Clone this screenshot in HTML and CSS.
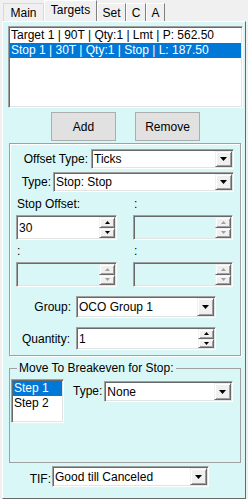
FILE: index.html
```html
<!DOCTYPE html>
<html lang="en">
<head>
    <meta charset="UTF-8">
    <title>Targets</title>
    <link rel="stylesheet" href="styles.css">
</head>
<body>

    <div class="tabs">
        <div class="tab t-main">Main</div>
        <div class="tab t-targets active">Targets</div>
        <div class="tab t-set">Set</div>
        <div class="tab t-c">C</div>
        <div class="tab t-a">A</div>
    </div>

    <div class="page">
        <div class="list targets">
            <div class="item">Target 1 | 90T | Qty:1 | Lmt | P: 562.50</div>
            <div class="item sel">Stop 1 | 30T | Qty:1 | Stop | L: 187.50</div>
        </div>

        <div class="buttons">
            <button class="btn">Add</button>
            <button class="btn">Remove</button>
        </div>

        <div class="box">
            <div class="row r-offset">
                <span class="lbl">Offset Type:</span>
                <div class="combo">
                    <span class="val">Ticks</span>
                    <span class="drop"><svg width="7" height="4" viewBox="0 0 7 4"><polygon points="0,0 7,0 3.5,4" fill="#000"/></svg></span>
                </div>
            </div>
            <div class="row r-type">
                <span class="lbl">Type:</span>
                <div class="combo">
                    <span class="val">Stop: Stop</span>
                    <span class="drop"><svg width="7" height="4" viewBox="0 0 7 4"><polygon points="0,0 7,0 3.5,4" fill="#000"/></svg></span>
                </div>
            </div>

            <div class="pair-lbl p1">
                <span>Stop Offset:</span>
                <span>:</span>
            </div>
            <div class="pair">
                <div class="spin">
                    <span class="val">30</span>
                    <span class="arrows">
                        <span><svg width="5" height="3" viewBox="0 0 5 3"><polygon points="2.5,0 5,3 0,3" fill="#000"/></svg></span>
                        <span><svg width="5" height="3" viewBox="0 0 5 3"><polygon points="0,0 5,0 2.5,3" fill="#000"/></svg></span>
                    </span>
                </div>
                <div class="spin off">
                    <span class="val"></span>
                    <span class="arrows">
                        <span><svg width="5" height="3" viewBox="0 0 5 3"><polygon points="2.5,0 5,3 0,3" fill="#a0a0a0"/></svg></span>
                        <span><svg width="5" height="3" viewBox="0 0 5 3"><polygon points="0,0 5,0 2.5,3" fill="#a0a0a0"/></svg></span>
                    </span>
                </div>
            </div>

            <div class="pair-lbl p2">
                <span>:</span>
                <span>:</span>
            </div>
            <div class="pair">
                <div class="spin off">
                    <span class="val"></span>
                    <span class="arrows">
                        <span><svg width="5" height="3" viewBox="0 0 5 3"><polygon points="2.5,0 5,3 0,3" fill="#a0a0a0"/></svg></span>
                        <span><svg width="5" height="3" viewBox="0 0 5 3"><polygon points="0,0 5,0 2.5,3" fill="#a0a0a0"/></svg></span>
                    </span>
                </div>
                <div class="spin off">
                    <span class="val"></span>
                    <span class="arrows">
                        <span><svg width="5" height="3" viewBox="0 0 5 3"><polygon points="2.5,0 5,3 0,3" fill="#a0a0a0"/></svg></span>
                        <span><svg width="5" height="3" viewBox="0 0 5 3"><polygon points="0,0 5,0 2.5,3" fill="#a0a0a0"/></svg></span>
                    </span>
                </div>
            </div>

            <div class="row r-group">
                <span class="lbl">Group:</span>
                <div class="combo">
                    <span class="val">OCO Group 1</span>
                    <span class="drop"><svg width="7" height="4" viewBox="0 0 7 4"><polygon points="0,0 7,0 3.5,4" fill="#000"/></svg></span>
                </div>
            </div>
            <div class="row r-qty">
                <span class="lbl">Quantity:</span>
                <div class="spin">
                    <span class="val">1</span>
                    <span class="arrows">
                        <span><svg width="5" height="3" viewBox="0 0 5 3"><polygon points="2.5,0 5,3 0,3" fill="#000"/></svg></span>
                        <span><svg width="5" height="3" viewBox="0 0 5 3"><polygon points="0,0 5,0 2.5,3" fill="#000"/></svg></span>
                    </span>
                </div>
            </div>
        </div>

        <fieldset class="group">
            <legend>Move To Breakeven for Stop:</legend>
            <div class="bk">
                <div class="list steps">
                    <div class="item sel">Step 1</div>
                    <div class="item">Step 2</div>
                </div>
                <span class="lbl bk-lbl">Type:</span>
                <div class="combo">
                    <span class="val">None</span>
                    <span class="drop"><svg width="7" height="4" viewBox="0 0 7 4"><polygon points="0,0 7,0 3.5,4" fill="#000"/></svg></span>
                </div>
            </div>
        </fieldset>

        <div class="row r-tif">
            <span class="lbl">TIF:</span>
            <div class="combo">
                <span class="val">Good till Canceled</span>
                <span class="drop"><svg width="7" height="4" viewBox="0 0 7 4"><polygon points="0,0 7,0 3.5,4" fill="#000"/></svg></span>
            </div>
        </div>
    </div>

</body>
</html>
```

FILE: styles.css
```css
* {
    box-sizing: border-box;
}
body {
    margin: 0;
    width: 248px;
    height: 499px;
    overflow: hidden;
    background: #f0f0f0;
    font-family: "Liberation Sans", Arial, sans-serif;
    font-size: 12px;
    color: #000;
}

/* tab strip */
.tabs {
    display: flex;
    align-items: flex-end;
    height: 21px;
    padding-left: 3px;
}
.tab {
    height: 18px;
    padding-top: 2px;
    line-height: 14px;
    text-align: center;
    border: 1px solid;
    border-bottom: none;
    border-color: #fff #808080 transparent #fff;
    background: #f0f0f0;
}
.tab.active {
    height: 21px;
}
.t-main { width: 41px; border-color: #d9d9d9; }
.t-targets { width: 53px; }
.t-set { width: 29px; }
.t-c { width: 20px; }
.t-a { width: 19px; }

/* tab page */
.page {
    margin-left: 2px;
    width: 244px;
    height: 478px;
    padding-top: 4px;
    border: 1px solid;
    border-color: #fff #696969 #696969 #fff;
    background: #d9f7f7;
}

/* sunken 3d controls */
.list, .combo, .spin {
    background: #fff;
    border: 1px solid;
    border-color: #a0a0a0 #fff #fff #a0a0a0;
    box-shadow: inset 1px 1px 0 #696969, inset -1px -1px 0 #e3e3e3;
    padding: 1px;
}
.item {
    height: 15px;
    line-height: 15px;
    padding-left: 1px;
    white-space: nowrap;
}
.sel {
    background: #0078d7;
    color: #fff;
}
.targets {
    margin-left: 5px;
    width: 235px;
    height: 82px;
}

.buttons {
    display: flex;
    gap: 19px;
    padding-left: 48px;
    margin-top: 4px;
}
.btn {
    width: 65px;
    height: 29px;
    padding: 0;
    font: inherit;
    color: #000;
    background: #e1e1e1;
    border: 1px solid #adadad;
}

/* offset box */
.box {
    margin: 2px 0 0 6px;
    width: 232px;
    height: 213px;
    border: 1px solid #a0a0a0;
    box-shadow: inset 1px 1px 0 #fff, 1px 1px 0 #fff;
}
.row {
    display: flex;
    align-items: center;
}
.lbl {
    text-align: right;
    white-space: nowrap;
}

.combo {
    display: flex;
    height: 20px;
}
.combo .val, .spin .val {
    flex: 1;
    display: flex;
    align-items: center;
    padding-left: 1px;
    white-space: nowrap;
}
.drop {
    width: 17px;
    display: flex;
    align-items: center;
    justify-content: center;
    background: #f0f0f0;
    border: 1px solid;
    border-color: #f0f0f0 #696969 #696969 #f0f0f0;
    box-shadow: inset 1px 1px 0 #fff, inset -1px -1px 0 #a0a0a0;
}

.spin {
    display: flex;
    height: 25px;
}
.spin.off {
    background: #d9f7f7;
}
.arrows {
    width: 16px;
    display: flex;
    flex-direction: column;
}
.arrows span {
    flex: 1;
    display: flex;
    align-items: center;
    justify-content: center;
    background: #f0f0f0;
    border: 1px solid;
    border-color: #f0f0f0 #696969 #696969 #f0f0f0;
    box-shadow: inset 1px 1px 0 #fff, inset -1px -1px 0 #a0a0a0;
}

.r-offset { margin-top: 5px; }
.r-offset .lbl { width: 78px; margin-right: 3px; }
.r-offset .combo { width: 143px; }

.r-type { margin-top: 3px; }
.r-type .lbl { width: 41px; margin-right: 2px; }
.r-type .combo { width: 181px; }

.pair-lbl {
    display: grid;
    grid-template-columns: 117px 100px;
    padding-left: 7px;
    line-height: 15px;
}
.p1 { margin-top: 5px; }
.p2 { margin-top: 4px; }
.pair {
    display: grid;
    grid-template-columns: 101px 100px;
    gap: 16px;
    padding-left: 6px;
    margin-top: 3px;
}

.r-group { margin-top: 9px; }
.r-group .lbl { width: 61px; margin-right: 5px; }
.r-group .combo { width: 140px; height: 22px; }

.r-qty { margin-top: 9px; }
.r-qty .lbl { width: 60px; margin-right: 6px; }
.r-qty .spin { width: 140px; height: 23px; }

/* breakeven group */
.group {
    margin: 5px 0 0 6px;
    width: 232px;
    height: 102px;
    min-width: 0;
    padding: 3px 0 0 1px;
    border: 1px solid #a0a0a0;
}
.group legend {
    margin-left: 6px;
    padding: 0 2px;
    line-height: 15px;
}
.bk {
    display: flex;
    align-items: flex-start;
}
.steps {
    width: 53px;
    height: 44px;
}
.bk-lbl {
    margin: 5px 0 0 9px;
    line-height: 15px;
}
.bk .combo {
    width: 129px;
    height: 21px;
    margin: 2px 0 0 2px;
}

.r-tif { margin-top: 3px; }
.r-tif .lbl { width: 48px; margin-right: 1px; margin-top: 5px; }
.r-tif .combo { width: 157px; height: 21px; }
```
